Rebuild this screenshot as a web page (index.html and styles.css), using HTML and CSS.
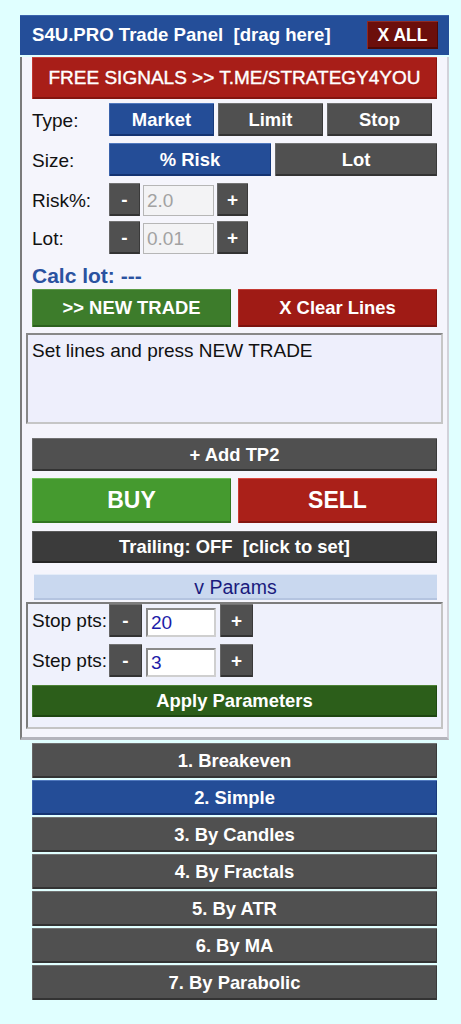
FILE: index.html
```html
<!DOCTYPE html>
<html>
<head>
<meta charset="utf-8">
<link rel="stylesheet" href="styles.css">
</head>
<body>
<div class="panel">
  <div class="header">
    <span class="title">S4U.PRO Trade Panel&nbsp; [drag here]</span>
    <div class="btn xall">X ALL</div>
  </div>
  <div class="body">
    <div class="btn signals">FREE SIGNALS &gt;&gt; T.ME/STRATEGY4YOU</div>

    <div class="row r-type">
      <span class="label">Type:</span>
      <div class="seg3">
        <div class="btn blue">Market</div>
        <div class="btn gray">Limit</div>
        <div class="btn gray">Stop</div>
      </div>
    </div>

    <div class="row r-size">
      <span class="label">Size:</span>
      <div class="seg2">
        <div class="btn blue">% Risk</div>
        <div class="btn gray">Lot</div>
      </div>
    </div>

    <div class="row r-risk">
      <span class="label">Risk%:</span>
      <div class="stepper">
        <div class="btn gray step">-</div>
        <div class="inp off">2.0</div>
        <div class="btn gray step">+</div>
      </div>
    </div>

    <div class="row r-lot">
      <span class="label">Lot:</span>
      <div class="stepper">
        <div class="btn gray step">-</div>
        <div class="inp off">0.01</div>
        <div class="btn gray step">+</div>
      </div>
    </div>

    <div class="calc">Calc lot: ---</div>

    <div class="pair actions">
      <div class="btn green">&gt;&gt; NEW TRADE</div>
      <div class="btn red">X Clear Lines</div>
    </div>

    <div class="memo">Set lines and press NEW TRADE</div>

    <div class="btn gray addtp">+ Add TP2</div>

    <div class="pair trade">
      <div class="btn buy">BUY</div>
      <div class="btn sell">SELL</div>
    </div>

    <div class="btn dark trailing">Trailing: OFF&nbsp; [click to set]</div>

    <div class="params-toggle">v Params</div>

    <div class="params">
      <div class="row prow">
        <span class="plabel">Stop pts:</span>
        <div class="stepper wide">
          <div class="btn gray pstep">-</div>
          <div class="inp on">20</div>
          <div class="btn gray pstep">+</div>
        </div>
      </div>
      <div class="row prow second">
        <span class="plabel">Step pts:</span>
        <div class="stepper wide">
          <div class="btn gray pstep">-</div>
          <div class="inp on">3</div>
          <div class="btn gray pstep">+</div>
        </div>
      </div>
      <div class="btn apply">Apply Parameters</div>
    </div>
  </div>
</div>

<div class="list">
  <div class="btn gray item">1. Breakeven</div>
  <div class="btn blue item">2. Simple</div>
  <div class="btn gray item">3. By Candles</div>
  <div class="btn gray item">4. By Fractals</div>
  <div class="btn gray item">5. By ATR</div>
  <div class="btn gray item">6. By MA</div>
  <div class="btn gray item">7. By Parabolic</div>
</div>
</body>
</html>
```

FILE: styles.css
```css
* { box-sizing: border-box; }

body {
  margin: 0;
  background: #e0ffff;
  font-family: "Liberation Sans", Arial, sans-serif;
  color: #111;
}

.panel {
  margin: 15px 0 0 20px;
  width: 429px;
}

.header {
  height: 40px;
  background: #244e99;
  box-shadow: inset 0 1px 0 #3b64ad;
  display: flex;
  align-items: center;
  justify-content: space-between;
  padding: 0 11px 0 12px;
  color: #fff;
  font-weight: bold;
  font-size: 18.6px;
}

.btn {
  display: flex;
  align-items: center;
  justify-content: center;
  color: #fff;
  font-weight: bold;
  font-size: 18.4px;
  white-space: nowrap;
}

.xall {
  width: 71px;
  height: 28px;
  background: #6c0f0b;
  box-shadow: inset 1px 1px 0 #8f2b24, inset -1px -2px 0 #4c0806;
  font-size: 17.5px;
}

.body {
  background: #f5f5fc;
  border-left: 2px solid #7b7b7b;
  border-right: 2px solid #d2d2da;
  border-bottom: 3px solid #b4b4bc;
  padding: 0 10px 8px;
}

.gray {
  background: #505050;
  box-shadow: inset 0 1px 0 #727272, inset 1px 0 0 #666, inset -1px 0 0 #3a3a3a, inset 0 -2px 0 #333;
}

.dark {
  background: #3b3b3b;
  box-shadow: inset 0 1px 0 #5a5a5a, inset 1px 0 0 #555, inset -1px 0 0 #2a2a2a, inset 0 -2px 0 #262626;
}

.blue {
  background: #244d97;
  box-shadow: inset 0 1px 0 #5078be, inset 1px 0 0 #3a62aa, inset -1px 0 0 #173a7c, inset 0 -2px 0 #143371;
}

.signals {
  margin-top: 2px;
  height: 42px;
  background: #a81e18;
  box-shadow: inset 0 1px 0 #c8413a, inset 1px 0 0 #c0362f, inset -1px 0 0 #86140f, inset 0 -2px 0 #84150f;
  font-weight: normal;
  font-size: 19px;
  -webkit-text-stroke: 0.4px #fff;
}

.row {
  display: flex;
  align-items: center;
  height: 33px;
}

.label {
  width: 77px;
  font-size: 19px;
  padding-top: 2px;
}

.r-type { margin-top: 4px; }
.r-size { margin-top: 7px; }
.r-risk { margin-top: 7px; }
.r-lot { margin-top: 5px; }

.seg3 {
  display: flex;
  gap: 4px;
  height: 100%;
}
.seg3 .btn { width: 105px; }

.seg2 {
  display: flex;
  gap: 4px;
  flex: 1;
  height: 100%;
}
.seg2 .btn { flex: 1; }

.stepper {
  display: flex;
  align-items: flex-end;
  gap: 3px;
  height: 100%;
}
.stepper .step {
  width: 31px;
  height: 33px;
}
.stepper .btn { font-size: 19px; }

.inp {
  width: 71px;
  height: 31px;
  font-size: 19px;
  display: flex;
  align-items: center;
  padding-left: 3px;
}
.inp.off {
  background: #f3f3f5;
  color: #a2a2a2;
  border: 1.5px solid #b6b6b6;
}
.inp.on {
  width: 70px;
  height: 29px;
  background: #fff;
  color: #1c1ca8;
  border-top: 2px solid #8a8a8a;
  border-left: 2px solid #8a8a8a;
  border-right: 2px solid #cfcfcf;
  border-bottom: 2px solid #cfcfcf;
}

.calc {
  height: 35px;
  padding-top: 10px;
  line-height: 24px;
  font-size: 21px;
  font-weight: bold;
  color: #2a52a0;
}

.pair {
  display: flex;
  gap: 7px;
}
.pair .btn { flex: 1; }

.actions { height: 38px; }

.green {
  background: #3d7c2b;
  box-shadow: inset 0 1px 0 #5c9b47, inset 1px 0 0 #549240, inset -1px 0 0 #2d641f, inset 0 -2px 0 #2c611e;
}
.red {
  background: #9f1b15;
  box-shadow: inset 0 1px 0 #c43a33, inset 1px 0 0 #b8302a, inset -1px 0 0 #7e120e, inset 0 -2px 0 #7c120e;
}

.memo {
  margin: 6px -6px 0;
  height: 91px;
  background: #eeeffc;
  border-top: 2px solid #888;
  border-left: 2px solid #888;
  border-right: 2px solid #c6c6c6;
  border-bottom: 2px solid #c6c6c6;
  padding: 5px 4px;
  font-size: 19px;
  line-height: 22px;
}

.addtp {
  margin-top: 14px;
  height: 33px;
}

.trade {
  margin-top: 7px;
  height: 45px;
}
.trade .btn { font-size: 23px; }

.buy {
  background: #459a2f;
  box-shadow: inset 0 1px 0 #6cbd55, inset 1px 0 0 #62b34b, inset -1px 0 0 #347a22, inset 0 -2px 0 #327621;
}
.sell {
  background: #aa2019;
  box-shadow: inset 0 1px 0 #d8463e, inset 1px 0 0 #cc3b33, inset -1px 0 0 #861611, inset 0 -2px 0 #841611;
}

.trailing {
  margin-top: 8px;
  height: 32px;
}

.params-toggle {
  margin: 11px 0 0 2px;
  height: 26px;
  background: #c9d8ef;
  box-shadow: inset 0 1px 0 #e4ecf8, inset 0 -2px 0 #b4c4e0;
  color: #1b1b7d;
  font-size: 19.5px;
  display: flex;
  align-items: center;
  justify-content: center;
}

.params {
  margin: 2px -6px 0;
  background: #eff1fc;
  border-top: 2px solid #7d7d7d;
  border-left: 2px solid #7d7d7d;
  border-right: 2px solid #c4c4c4;
  border-bottom: 2px solid #c4c4c4;
  padding: 0 4px 10px;
}

.plabel {
  width: 77px;
  font-size: 19px;
  white-space: nowrap;
}

.prow .stepper { gap: 4px; }
.prow .pstep {
  width: 33px;
  height: 33px;
}
.prow.second { margin-top: 7px; }

.apply {
  margin-top: 8px;
  height: 32px;
  background: #2c5e1a;
  box-shadow: inset 0 1px 0 #4d8236, inset 1px 0 0 #427830, inset -1px 0 0 #1f4a11, inset 0 -2px 0 #1e4611;
}

.list {
  margin: 3px 0 0 32px;
  width: 405px;
}

.item {
  height: 35px;
  margin-bottom: 2px;
}
```
